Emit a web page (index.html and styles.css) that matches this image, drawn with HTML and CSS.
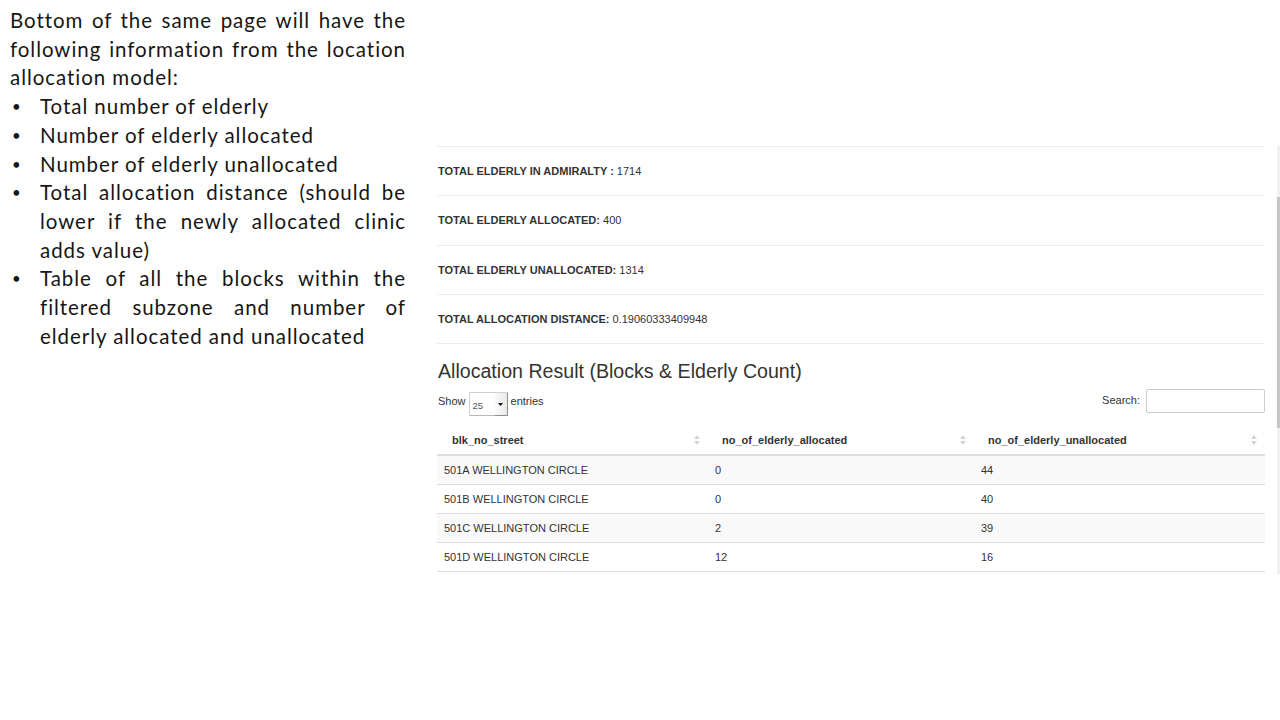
FILE: index.html
```html
<!DOCTYPE html>
<html lang="en">
<head>
<meta charset="utf-8">
<title>Location allocation model</title>
<link rel="stylesheet" href="styles.css">
</head>
<body>
<div class="slide">
  <div class="notes">
    <p class="intro">Bottom of the same page will have the following information from the location allocation model:</p>
    <ul class="bullets">
      <li><span class="dot">•</span><span class="txt">Total number of elderly</span></li>
      <li><span class="dot">•</span><span class="txt">Number of elderly allocated</span></li>
      <li><span class="dot">•</span><span class="txt">Number of elderly unallocated</span></li>
      <li><span class="dot">•</span><span class="txt">Total allocation distance (should be lower if the newly allocated clinic adds value)</span></li>
      <li><span class="dot">•</span><span class="txt">Table of all the blocks within the filtered subzone and number of elderly allocated and unallocated</span></li>
    </ul>
  </div>

  <div class="app">
    <div class="panel">
      <div class="stats">
        <div class="stat"><b>TOTAL ELDERLY IN ADMIRALTY :</b>&nbsp;1714</div>
        <div class="stat"><b>TOTAL ELDERLY ALLOCATED:</b>&nbsp;400</div>
        <div class="stat"><b>TOTAL ELDERLY UNALLOCATED:</b>&nbsp;1314</div>
        <div class="stat"><b>TOTAL ALLOCATION DISTANCE:</b>&nbsp;0.19060333409948</div>
      </div>

      <h3 class="title">Allocation Result (Blocks &amp; Elderly Count)</h3>

      <div class="controls">
        <div class="length">
          <span>Show</span>
          <div class="select">
            <span class="sel-val">25</span>
            <span class="sel-btn"><svg width="5" height="3" viewBox="0 0 5 3"><path d="M0 0h5L2.5 3z" fill="#111"/></svg></span>
          </div>
          <span>entries</span>
        </div>
        <div class="search">
          <span>Search:</span>
          <div class="input"></div>
        </div>
      </div>

      <table class="grid">
        <colgroup>
          <col class="c1"><col class="c2"><col class="c3">
        </colgroup>
        <thead>
          <tr>
            <th><div class="th"><span>blk_no_street</span><svg class="sort" width="6" height="10" viewBox="0 0 6 10"><path d="M3 0L6 4H0z M3 10L0 6h6z" fill="#d4d4d4"/></svg></div></th>
            <th><div class="th"><span>no_of_elderly_allocated</span><svg class="sort" width="6" height="10" viewBox="0 0 6 10"><path d="M3 0L6 4H0z M3 10L0 6h6z" fill="#d4d4d4"/></svg></div></th>
            <th><div class="th"><span>no_of_elderly_unallocated</span><svg class="sort" width="6" height="10" viewBox="0 0 6 10"><path d="M3 0L6 4H0z M3 10L0 6h6z" fill="#d4d4d4"/></svg></div></th>
          </tr>
        </thead>
        <tbody>
          <tr class="odd"><td>501A WELLINGTON CIRCLE</td><td>0</td><td>44</td></tr>
          <tr><td>501B WELLINGTON CIRCLE</td><td>0</td><td>40</td></tr>
          <tr class="odd"><td>501C WELLINGTON CIRCLE</td><td>2</td><td>39</td></tr>
          <tr><td>501D WELLINGTON CIRCLE</td><td>12</td><td>16</td></tr>
        </tbody>
      </table>
    </div>
    <div class="scrollbar"><div class="thumb"></div></div>
  </div>
</div>
</body>
</html>
```

FILE: styles.css
```css
* { box-sizing: border-box; }

html, body {
  margin: 0;
  padding: 0;
  background: #ffffff;
}

.slide {
  display: flex;
  align-items: flex-start;
  width: 1280px;
  height: 720px;
  overflow: hidden;
}

/* ---------- slide notes (left) ---------- */
.notes {
  width: 406px;
  padding: 6px 0 0 10px;
  font-family: Lato, "Open Sans", sans-serif;
  font-size: 20.5px;
  letter-spacing: 0.95px;
  line-height: 28.7px;
  color: #161616;
}

.intro {
  margin: 0;
  text-align: justify;
}

.bullets {
  list-style: none;
  margin: 0;
  padding: 0;
}

.bullets li {
  display: flex;
}

.dot {
  width: 30px;
  flex: none;
  padding-left: 2px;
  font-size: 15px;
}

.txt {
  flex: 1;
  text-align: justify;
}

/* ---------- app panel (right) ---------- */
.app {
  margin-left: 31px;
  margin-top: 146px;
  display: flex;
  align-items: flex-start;
  gap: 12px;
}

.panel {
  width: 828px;
  font-family: "Liberation Sans", Arial, sans-serif;
  font-size: 11px;
  color: #333333;
}

.scrollbar {
  width: 3px;
  height: 429px;
  background: #f1f1f1;
}

.thumb {
  margin-top: 51px;
  height: 231px;
  background: #c6c6c6;
}

.stats {
  border-bottom: 1px solid #ececec;
}

.stat {
  border-top: 1px solid #ececec;
  height: 49.25px;
  display: flex;
  align-items: center;
  padding-left: 1px;
}

.stat b {
  font-weight: bold;
  color: #333;
}

.title {
  margin: 16px 0 0 0;
  font-family: "Liberation Sans", Arial, sans-serif;
  font-weight: normal;
  font-size: 19.6px;
  line-height: 22px;
  color: #333;
  padding-left: 1px;
}

.controls {
  margin-top: 7px;
  height: 24px;
  display: flex;
  justify-content: space-between;
  align-items: center;
}

.length {
  display: flex;
  align-items: center;
  gap: 3px;
  padding-left: 1px;
}

.select {
  width: 39px;
  height: 24px;
  margin-top: 5px;
  border: 1px solid #d0d0d0;
  border-right: none;
  border-bottom: none;
  display: flex;
  background: #fff;
}

.sel-val {
  flex: 1;
  font-size: 9.5px;
  padding: 7px 0 0 3px;
  color: #555;
}

.sel-btn {
  width: 13px;
  display: flex;
  align-items: center;
  justify-content: center;
  padding-right: 1px;
  background: linear-gradient(to right, #fafafa, #e8e8e8);
  box-shadow: inset -1px 0 0 #8e8e8e, inset 0 -1px 0 #8e8e8e;
}

.select {
  box-shadow: inset 0 -1px 0 #b8b8b8;
}

.search {
  display: flex;
  align-items: center;
  gap: 6px;
}

.search span {
  margin-top: -3px;
}

.input {
  width: 119px;
  height: 24px;
  border: 1px solid #cccccc;
  border-radius: 2px;
  background: #fff;
}

/* ---------- table ---------- */
.grid {
  margin-top: 12px;
  width: 828px;
  table-layout: fixed;
  border-collapse: separate;
  border-spacing: 0;
}

.c1 { width: 271px; }
.c2 { width: 266px; }
.c3 { width: 291px; }

.grid th {
  height: 31px;
  padding: 0 5px 0 14px;
  border-bottom: 2px solid #dddddd;
  text-align: left;
  font-weight: bold;
  color: #333;
}

.grid th:first-child {
  padding-left: 15px;
}

.th {
  display: flex;
  justify-content: space-between;
  align-items: center;
}

.sort {
  flex: none;
  margin-right: 3px;
}

.grid td {
  height: 29px;
  padding: 0 7px;
  border-bottom: 1px solid #dddddd;
  color: #333;
}

.grid tr.odd td {
  background: #f9f9f9;
}
```
